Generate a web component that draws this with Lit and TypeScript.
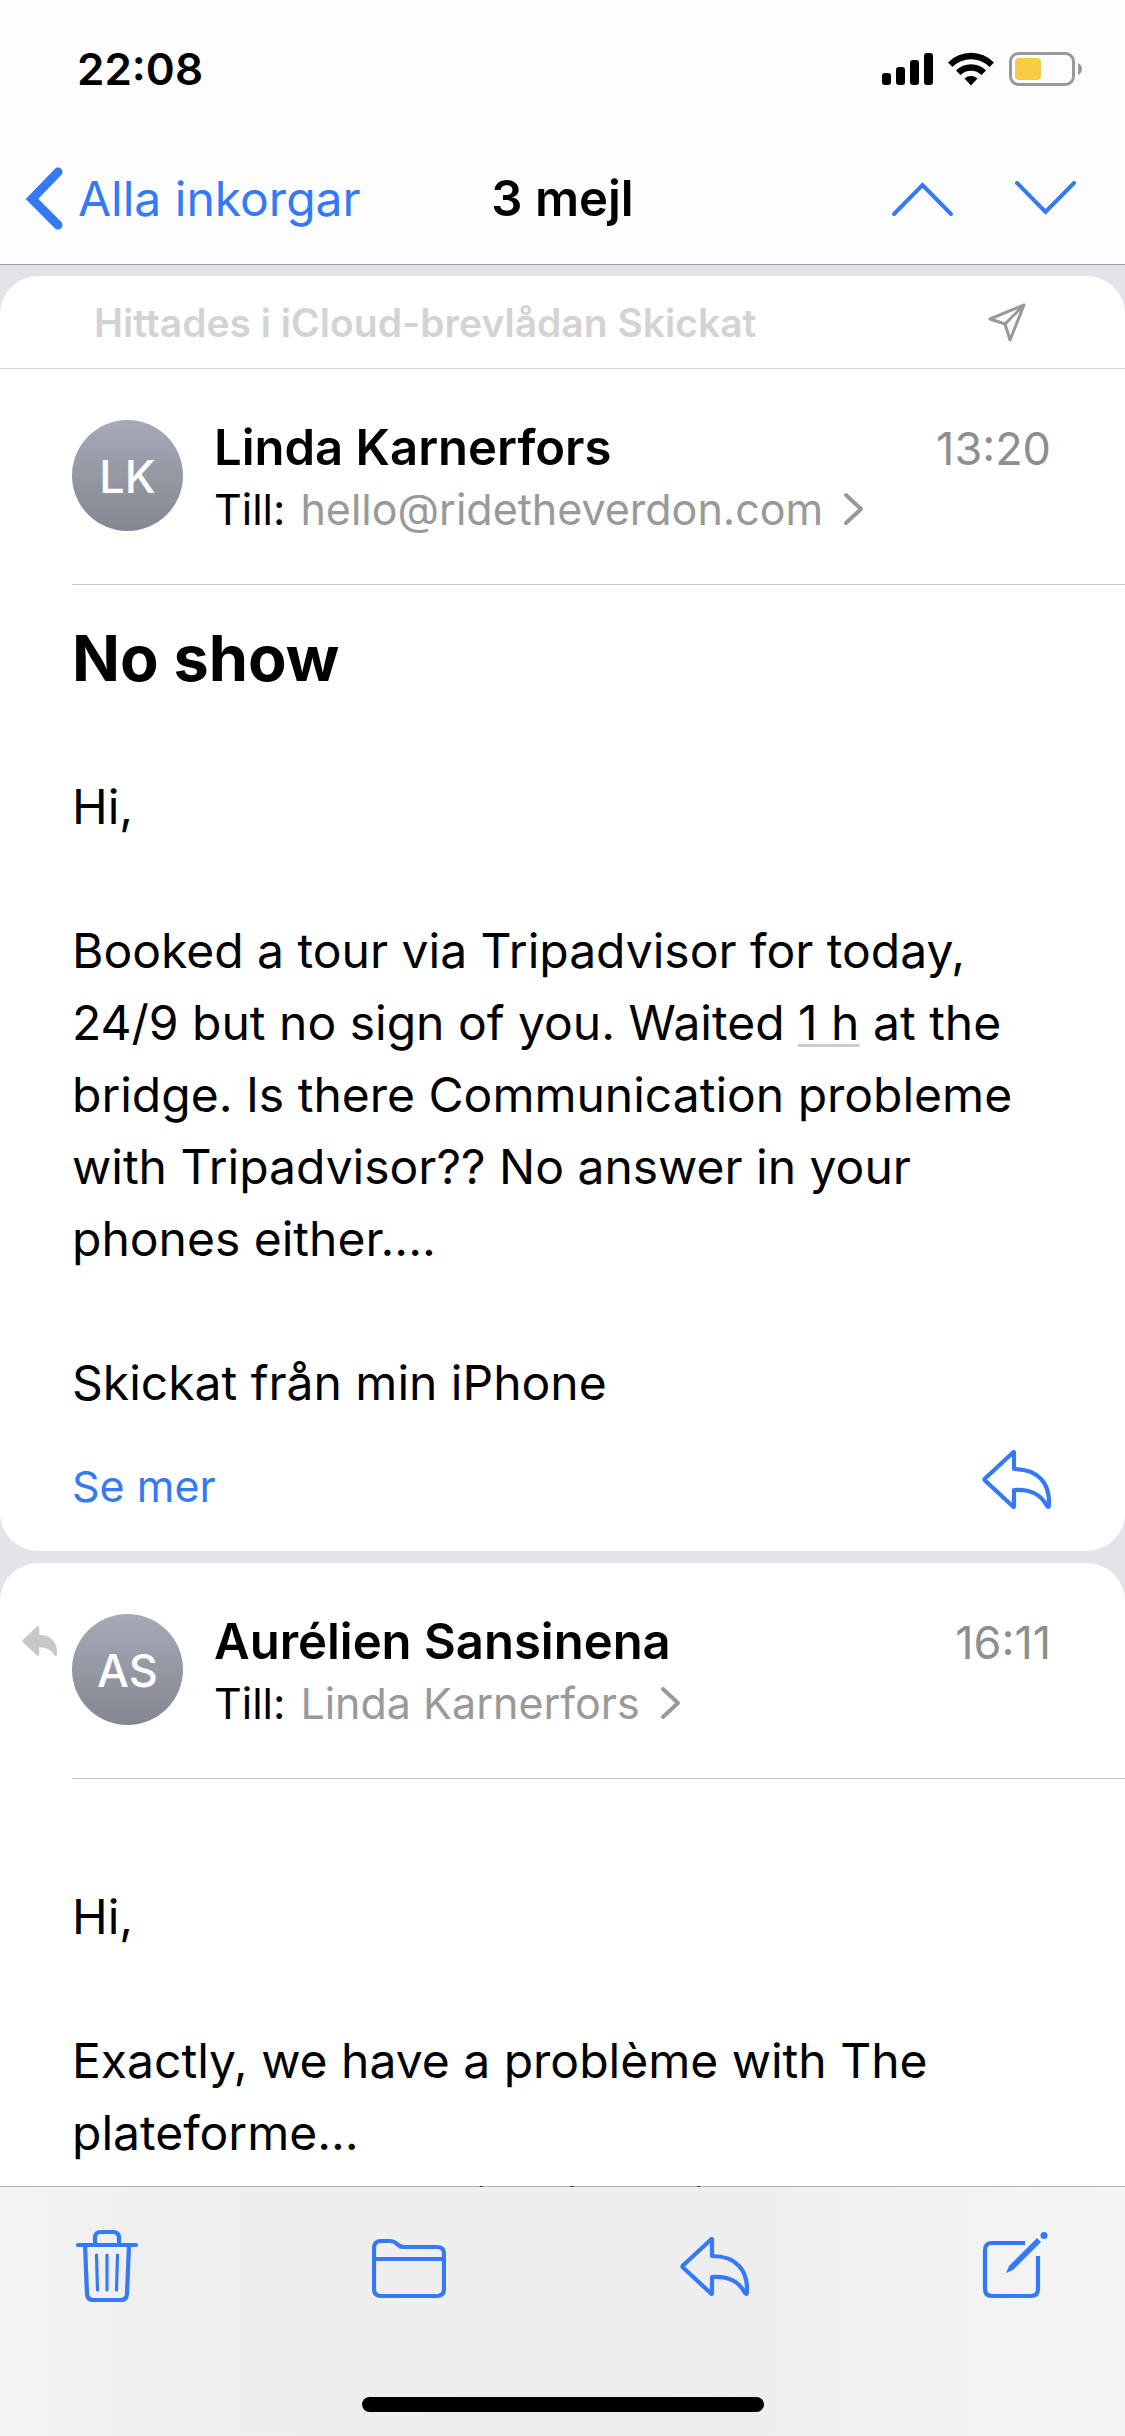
import { LitElement, html, css, svg, nothing } from "lit";
import { customElement, property } from "lit/decorators.js";

const replyPath = "M32 3 Q32 1 30.500 3 L3 28.500 Q2 29.500 3 30.500 L30.500 56 Q32 58 32 56 V40 C50 39 59 45 65 56 Q67 58 67 55 C68 34 57 19 32 19 Z";

@customElement("mail-message")
class MailMessage extends LitElement {
  @property() initials = "";
  @property() sender = "";
  @property() recipient = "";
  @property() time = "";
  @property({ type: Boolean }) replied = false;

  static styles = css`
    :host { display: block; background: #fff; border-radius: 38px; overflow: hidden; }
    .head { display: flex; align-items: flex-start; margin-left: 72px; padding: 0 74px 42px 0; margin-top: 51px; border-bottom: 1px solid #c6c6c8; position: relative; }
    .avatar { flex: none; width: 111px; height: 111px; border-radius: 50%; background: linear-gradient(#a6aab7, #838791); color: #fff; font-size: 45px; font-weight: 500; line-height: 113px; text-align: center; margin-right: 31px; }
    .who { flex: 1; min-width: 0; }
    .name { margin: 0; font-size: 49px; font-weight: 600; line-height: 56px; }
    .to { display: flex; align-items: center; gap: 15px; line-height: 66px; font-size: 43px; }
    .to button { display: flex; align-items: center; gap: 20px; font: inherit; line-height: 66px; color: #999; background: none; border: 0; padding: 0; }
    .time { font-size: 45px; line-height: 58px; color: #8e8e8e; }
    .replied { position: absolute; left: -50px; top: 12px; }
    svg { display: block; }
  `;

  render() {
    return html`
      <slot name="banner"></slot>
      <header class="head">
        ${this.replied
          ? html`<svg class="replied" width="35" height="30" viewBox="0 0 69 59" fill="#c8c8c8" stroke="#c8c8c8" stroke-width="4" stroke-linejoin="round" role="img" aria-label="Besvarat">${svg`<path d=${replyPath}/>`}</svg>`
          : nothing}
        <div class="avatar" aria-hidden="true">${this.initials}</div>
        <div class="who">
          <h2 class="name">${this.sender}</h2>
          <div class="to">
            <span>Till:</span>
            <button type="button">
              ${this.recipient}
              <svg width="21" height="34" viewBox="0 0 21 34" fill="none" stroke="#999" stroke-width="4" stroke-linecap="round" stroke-linejoin="round"><path d="M3 3 L18 17 L3 31"/></svg>
            </button>
          </div>
        </div>
        <time class="time">${this.time}</time>
      </header>
      <slot></slot>
    `;
  }
}

@customElement("app-root")
class AppRoot extends LitElement {
  static styles = css`
    :host { display: flex; flex-direction: column; height: 100vh; overflow: hidden; background: #e4e3e9; color: #000; font-family: Inter, "Noto Sans", sans-serif; }
    * { box-sizing: border-box; }
    svg { display: block; }
    button { font: inherit; color: inherit; background: none; border: 0; padding: 0; }
    a { color: inherit; text-decoration: none; }
    .top { flex: none; background: #fdfdfd; border-bottom: 1px solid #a1a0a6; }
    .status { display: flex; align-items: center; justify-content: space-between; height: 138px; padding: 0 42px 0 77px; }
    .clock { font-size: 44px; font-weight: 600; }
    .nav { display: grid; grid-template-columns: 1fr auto 1fr; align-items: center; height: 126px; padding: 0 25px 5px; font-size: 48px; }
    .back { display: flex; align-items: center; gap: 13px; color: #3479f6; justify-self: start; line-height: 60px; }
    .title { margin: 0; font-size: 49px; line-height: 60px; font-weight: 600; }
    .steps { display: flex; gap: 60px; justify-self: end; padding-right: 23px; color: #3479f6; }
    .mails { flex: 1; min-height: 0; overflow: hidden; display: flex; flex-direction: column; gap: 12px; padding-top: 11px; }
    mail-message { flex: none; }
    .banner { display: flex; align-items: center; justify-content: space-between; height: 93px; padding: 0 98px 0 94px; border-bottom: 1px solid #d2d2d2; color: #d3d3d3; font-size: 39px; font-weight: 600; }
    .subject { margin: 0; padding: 31px 72px 0; font-size: 63px; line-height: 84px; font-weight: 700; }
    .body { padding: 0 72px; font-size: 48px; line-height: 72px; }
    .body p { margin: 0 0 72px; }
    .first { padding-top: 71px; }
    .second { padding-top: 102px; }
    .first p:last-child { margin: 0; }
    .detected { text-decoration: underline #ccc 3px; text-underline-offset: 4px; }
    .foot { display: flex; align-items: flex-start; justify-content: space-between; padding: 31px 74px 36px 72px; color: #3479f6; }
    .foot button { height: 59px; }
    .foot .more { font-size: 43px; line-height: 58px; margin-top: 6px; }
    .tools { flex: none; position: relative; margin-top: -1px; border-top: 1px solid rgba(0, 0, 0, 0.3); background: linear-gradient(90deg, #f4f4f4, #efefef 12%, #eeeeee 65%, #f5f5f5) padding-box; height: 250px; display: flex; flex-direction: column; justify-content: space-between; align-items: center; padding-bottom: 24px; }
    .row { align-self: stretch; display: flex; justify-content: space-between; padding: 42px 77px 0 75px; color: #3479f6; }
    .home { width: 402px; height: 15px; border-radius: 8px; background: #000; }
  `;

  private reply() {
    return html`<svg width="69" height="59" viewBox="0 0 69 59" fill="none" stroke="currentColor" stroke-width="4.200" stroke-linejoin="round"><path d=${replyPath}/></svg>`;
  }

  render() {
    return html`
      <div class="top">
        <div class="status">
          <time class="clock">22:08</time>
          <svg width="202" height="36" viewBox="0 0 202 36" role="img" aria-label="Signal, wifi, batteri">
            <rect x="1" y="22" width="9" height="12" rx="3"/>
            <rect x="15" y="16" width="9" height="18" rx="3"/>
            <rect x="29" y="9" width="9" height="25" rx="3"/>
            <rect x="43" y="2" width="9" height="32" rx="3"/>
            <path d="M67 11.500 A32 32 0 0 1 113 11.500 L108.500 16 A26 26 0 0 0 71.500 16 Z"/>
            <path d="M75 19.500 A21 21 0 0 1 105 19.500 L100.500 24 A15 15 0 0 0 79.500 24 Z"/>
            <path d="M83.500 27.500 A10 10 0 0 1 96.500 27.500 L90 34.500 Z"/>
            <rect x="129.500" y="2.500" width="63" height="31" rx="8" fill="none" stroke="#999" stroke-width="3"/>
            <rect x="134" y="7" width="26" height="22" rx="4" fill="#f7cd46"/>
            <path d="M197 12 Q201 14 201 18 Q201 22 197 24 Z" fill="#999"/>
          </svg>
        </div>
        <nav class="nav">
          <a class="back" href="#">
            <svg width="40" height="64" viewBox="0 0 40 64" fill="none" stroke="currentColor" stroke-width="9" stroke-linecap="round" stroke-linejoin="miter"><path d="M33 5 L7 32 L33 58"/></svg>
            Alla inkorgar
          </a>
          <h1 class="title">3 mejl</h1>
          <div class="steps">
            <button type="button" aria-label="Föregående"><svg width="63" height="36" viewBox="0 0 63 36" fill="none" stroke="currentColor" stroke-width="4" stroke-linecap="round"><path d="M3 33 L31.500 4 L60 33"/></svg></button>
            <button type="button" aria-label="Nästa"><svg width="63" height="36" viewBox="0 0 63 36" fill="none" stroke="currentColor" stroke-width="4" stroke-linecap="round"><path d="M3 2 L31.500 31 L60 2"/></svg></button>
          </div>
        </nav>
      </div>
      <main class="mails">
        <mail-message initials="LK" sender="Linda Karnerfors" recipient="hello@ridetheverdon.com" time="13:20">
          <div class="banner" slot="banner">
            <span>Hittades i iCloud-brevlådan Skickat</span>
            <svg width="40" height="40" viewBox="0 0 40 40" fill="none" stroke="#999" stroke-width="3" stroke-linejoin="round"><path d="M37 3 L3 17 L18 22 L23 38 Z M37 3 L18 22"/></svg>
          </div>
          <h2 class="subject">No show</h2>
          <div class="body first">
            <p>Hi,</p>
            <p>Booked a tour via Tripadvisor for today, 24/9 but no sign of you. Waited <span class="detected">1 h</span> at the bridge. Is there Communication probleme with Tripadvisor?? No answer in your phones either....</p>
            <p>Skickat från min iPhone</p>
          </div>
          <div class="foot">
            <button class="more" type="button">Se mer</button>
            <button type="button" aria-label="Svara">${this.reply()}</button>
          </div>
        </mail-message>
        <mail-message initials="AS" sender="Aurélien Sansinena" recipient="Linda Karnerfors" time="16:11" replied>
          <div class="body second">
            <p>Hi,</p>
            <p>Exactly, we have a problème with The plateforme...<br>They sent an email using this name, but had</p>
          </div>
        </mail-message>
      </main>
      <footer class="tools">
        <div class="row">
          <button type="button" aria-label="Radera"><svg width="64" height="74" viewBox="0 0 64 74" fill="none" stroke="currentColor" stroke-width="4.200" stroke-linecap="round" stroke-linejoin="round"><path d="M3 16 H61 M20 15 V9 Q20 3 26 3 H38 Q44 3 44 9 V15 M10 16 L12 65 Q12.500 71 18 71 H46 Q51.500 71 52 65 L54 16"/><path stroke-width="3.200" d="M21.500 26 L22.500 61 M32 26 V61 M42.500 26 L41.500 61"/></svg></button>
          <button type="button" aria-label="Flytta"><svg width="74" height="74" viewBox="0 0 74 74" fill="none" stroke="currentColor" stroke-width="4.200" stroke-linejoin="round"><path d="M2 60 V19 Q2 12 9 12 H18 Q22 12 25 15 Q28 18 32 18 H65 Q72 18 72 25 V60 Q72 67 65 67 H9 Q2 67 2 60 Z M2 30 H72"/></svg></button>
          <button type="button" aria-label="Svara">${this.reply()}</button>
          <button type="button" aria-label="Nytt mejl"><svg width="66" height="74" viewBox="0 0 66 74" fill="none" stroke="currentColor" stroke-width="4.200"><path d="M43 14 H10 Q3 14 3 21 V60 Q3 67 10 67 H49 Q56 67 56 60 V27"/><path fill="currentColor" stroke="none" d="M24 44 L27 37 L55 9 L59 13 L31 41 Z"/><circle cx="62" cy="6.500" r="3.500" fill="currentColor" stroke="none"/></svg></button>
        </div>
        <div class="home"></div>
      </footer>
    `;
  }
}
